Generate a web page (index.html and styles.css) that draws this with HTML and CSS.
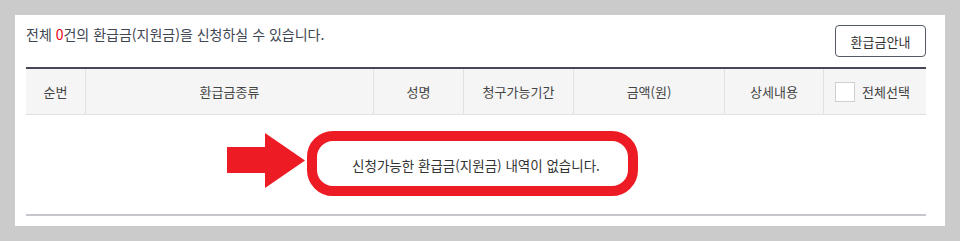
FILE: index.html
```html
<!DOCTYPE html>
<html lang="ko">
<head>
<meta charset="utf-8">
<link rel="stylesheet" href="styles.css">
</head>
<body>
<div class="panel">
  <div class="topbar">
    <p class="summary">전체 <span class="count">0</span>건의 환급금(지원금)을 신청하실 수 있습니다.</p>
    <button class="guide-btn" type="button">환급금안내</button>
  </div>
  <div class="table">
    <div class="thead">
      <div class="th c1">순번</div>
      <div class="th c2">환급금종류</div>
      <div class="th c3">성명</div>
      <div class="th c4">청구가능기간</div>
      <div class="th c5">금액(원)</div>
      <div class="th c6">상세내용</div>
      <div class="th c7"><span class="checkbox"></span><span>전체선택</span></div>
    </div>
    <div class="empty-row">
      <p class="empty-msg">신청가능한 환급금(지원금) 내역이 없습니다.</p>
      <svg class="arrow" width="78" height="55" viewBox="0 0 78 55"><polygon points="0,14 38,14 38,0 78,27.5 38,55 38,40 0,40" fill="#ed1c24"/></svg>
      <div class="highlight"></div>
    </div>
  </div>
</div>
</body>
</html>
```

FILE: styles.css
```css
* { box-sizing: border-box; }
html, body { margin: 0; padding: 0; }
body {
  background: #cbcbcb;
  width: 960px;
  height: 241px;
  font-family: "Noto Sans CJK KR", "Noto Sans", sans-serif;
  color: #333;
  overflow: hidden;
}
.panel {
  margin: 15px 0 0 15px;
  width: 930px;
  height: 211px;
  background: #fff;
  padding: 10px 19px 0 11px;
}
.topbar {
  display: flex;
  justify-content: space-between;
  align-items: flex-start;
  height: 42px;
}
.summary {
  margin: 0;
  font-size: 14px;
  line-height: 19px;
  color: #404552;
}
.count { color: #e60012; }
.guide-btn {
  width: 91px;
  height: 32px;
  border: 1px solid #555b66;
  border-radius: 4px;
  background: #fff;
  font-family: inherit;
  font-size: 13px;
  color: #333;
  padding: 0;
}
.table {
  border-top: 2px solid #474857;
}
.thead {
  display: flex;
  height: 46px;
  background: #f5f5f5;
  border-bottom: 1px solid #e1e1e4;
}
.th {
  display: flex;
  align-items: center;
  justify-content: center;
  font-size: 13px;
  color: #444;
  border-right: 1px solid #e1e1e4;
}
.th:last-child { border-right: 0; }
.c1 { width: 60px; }
.c2 { width: 288px; }
.c3 { width: 90px; }
.c4 { width: 110px; }
.c5 { width: 151px; }
.c6 { width: 99px; }
.c7 { flex: 1; justify-content: flex-start; padding-left: 11px; gap: 7px; }
.checkbox {
  width: 20px;
  height: 20px;
  border: 1px solid #cfcfcf;
  background: #fff;
}
.empty-row {
  position: relative;
  height: 101px;
  border-bottom: 2px solid #c6c6cd;
  display: flex;
  align-items: center;
  justify-content: center;
}
.empty-msg {
  margin: 0;
  font-size: 13.5px;
  color: #333;
  padding-top: 1px;
}
.arrow {
  position: absolute;
  left: 201px;
  top: 18px;
}
.highlight {
  position: absolute;
  left: 281px;
  top: 16px;
  width: 331px;
  height: 65px;
  border: 10px solid #ed1c24;
  border-radius: 26px;
}
```
